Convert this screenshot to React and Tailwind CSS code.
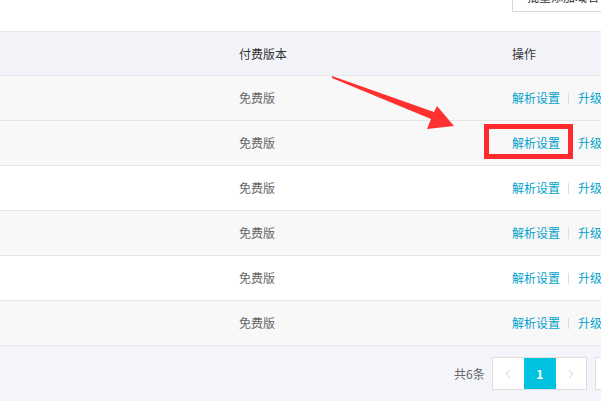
import { ChevronLeft, ChevronRight } from "lucide-react";

const rows = [
  { bg: "bg-[#f8f8f8]" },
  { bg: "bg-[#f8f8f8]" },
  { bg: "bg-white" },
  { bg: "bg-[#f8f8f8]" },
  { bg: "bg-white" },
  { bg: "bg-[#f8f8f8]" },
];

export default function App() {
  return (
    <div
      className="relative h-[401px] w-[601px] overflow-hidden bg-white text-[12px] text-[#666]"
      style={{ fontFamily: '"Microsoft YaHei", "Noto Sans CJK SC", sans-serif' }}
    >
      {/* toolbar, scrolled mostly out of view */}
      <div className="flex h-[31px] justify-end">
        <button className="mt-[-18px] h-[30px] w-[110px] shrink-0 translate-x-[21px] border border-[#d9d9d9] bg-white pl-[14px] text-left text-[12px] text-[#333]">
          批量添加域名
        </button>
      </div>

      {/* table */}
      <div className="border-t border-[#e6e6e6]">
        <div className="grid h-[44px] grid-cols-[239px_273px_1fr] items-center border-b border-[#e6e6e6] bg-[#f3f4f9] text-[#333]">
          <div />
          <div>付费版本</div>
          <div>操作</div>
        </div>
        {rows.map((r, i) => (
          <div
            key={i}
            className={`grid h-[45px] grid-cols-[239px_273px_1fr] items-center border-b border-[#e6e6e6] ${r.bg}`}
          >
            <div />
            <div>免费版</div>
            <div className="flex items-center whitespace-nowrap">
              <span className="text-[#00a2ca]">解析设置</span>
              <span className="ml-[8px] mr-[9px] h-[11px] w-px bg-[#ddd]" />
              <span className="text-[#00a2ca]">升级</span>
            </div>
          </div>
        ))}
      </div>

      {/* pagination */}
      <div className="flex h-[55px] items-center bg-[#f4f5fa] pl-[454px]">
        <span className="mr-[7px] shrink-0 whitespace-nowrap text-[#666]">共6条</span>
        <div className="flex h-[33px] shrink-0 border border-[#dedede] bg-white">
          <div className="flex w-[31px] items-center justify-center text-[#bbb]">
            <ChevronLeft size={14} strokeWidth={1.3} />
          </div>
          <div className="flex w-[32px] items-center justify-center bg-[#00c1de] font-bold text-white">
            1
          </div>
          <div className="flex w-[30px] items-center justify-center text-[#bbb]">
            <ChevronRight size={14} strokeWidth={1.3} />
          </div>
        </div>
        <div className="ml-[8px] h-[33px] w-[40px] shrink-0 border border-[#dedede] bg-white" />
      </div>

      {/* annotation overlay */}
      <div className="absolute left-[484px] top-[124px] h-[35px] w-[89px] border-[5px] border-[#ff2a2e]" />
      <svg className="absolute left-0 top-0" width="601" height="401">
        <polygon
          points="332,76 434,112 437,106 454,126 427,129 431,119 332,78"
          fill="#ff3030"
        />
      </svg>
    </div>
  );
}
